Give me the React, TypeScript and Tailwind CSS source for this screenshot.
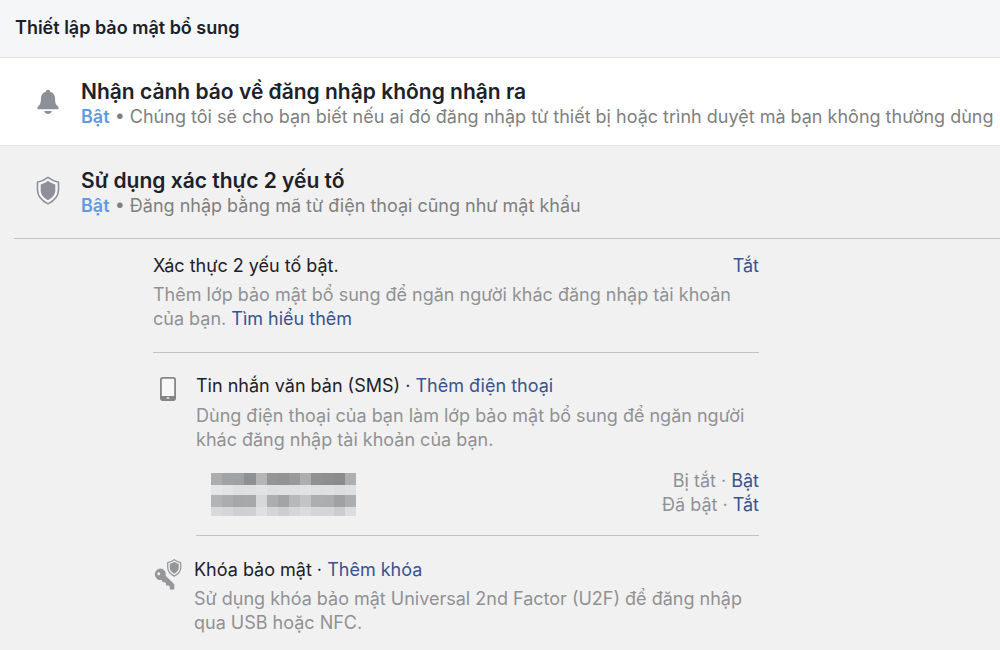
import type { ReactNode } from 'react';

const BellIcon = () => (
    <svg viewBox="0 -2 22 28" className="h-7 w-[22px]" fill="#8d9098" aria-hidden="true">
        <path d="M11 0.8c1.200 0 2 0.700 2.200 1.900 3.300 1 4.900 3.500 4.900 6.900 0 4.200 0.500 6 2.600 7.700 1.300 1.100 1.400 2.900-0.100 2.900H1.400c-1.500 0-1.400-1.800-0.100-2.900 2.100-1.700 2.600-3.500 2.600-7.700 0-3.400 1.600-5.900 4.900-6.900 0.200-1.200 1-1.900 2.200-1.900z" />
        <path d="M7.200 22h7.600c-0.500 1.800-1.900 3-3.800 3s-3.300-1.200-3.800-3z" />
    </svg>
);

const SHIELD_OUTER = 'M12 1.300C9.300 3.500 5.500 5.300 1.500 6.200v7.800c0 6.300 4.500 10.800 10.500 13.900 6-3.100 10.500-7.600 10.500-13.900V6.200C18.500 5.300 14.700 3.500 12 1.300z';
const SHIELD_INNER = 'M12 4.800C9.800 6.500 7.300 7.700 4.700 8.400v5.800c0 4.400 3 7.700 7.300 10 4.300-2.300 7.300-5.600 7.300-10V8.400C16.700 7.700 14.200 6.500 12 4.800z';

const ShieldIcon = () => (
    <svg viewBox="0 0 24 29" className="h-[29px] w-6" aria-hidden="true">
        <path d={SHIELD_OUTER} fill="#f7f7f8" stroke="#8d9098" strokeWidth="1.600" strokeLinejoin="round" />
        <path d={SHIELD_INNER} fill="#8d9098" />
    </svg>
);

const PhoneIcon = () => (
    <svg viewBox="0 0 16 24" className="h-6 w-4" aria-hidden="true">
        <rect x="0.900" y="0.900" width="14.200" height="22.200" rx="2" fill="#f7f7f8" stroke="#858585" strokeWidth="1.800" />
        <path d="M1 19h14v2.500c0 0.900-0.600 1.500-1.500 1.500h-11c-0.900 0-1.500-0.600-1.500-1.500z" fill="#858585" />
        <rect x="6.500" y="20.300" width="3" height="1.500" rx="0.700" fill="#f1f1f1" />
    </svg>
);

const KeyIcon = () => (
    <svg viewBox="0 0 29 32" className="h-8 w-[29px]" aria-hidden="true">
        <path
            fillRule="evenodd"
            d="M7 10.500a5.800 5.800 0 0 1 5.700 7.300l8.600 8.400v5.300h-4.500v-2.700l-1.400-1.200h-2.300v-2.200l-1.200-1.100h-2.100l-1.300-2.300A5.800 5.800 0 1 1 7 10.500zM5.800 14.200a1.500 1.500 0 1 0 0 3 1.500 1.500 0 0 0 0-3z"
            fill="#949699"
        />
        <g transform="translate(13.800 0.800) scale(0.620)">
            <path d={SHIELD_OUTER} fill="#f1f1f1" stroke="#949699" strokeWidth="2" strokeLinejoin="round" />
            <path d={SHIELD_INNER} fill="#949699" />
        </g>
    </svg>
);

// Phone number is masked with a mosaic
const mosaic = [
    { y: 0, height: 12, cells: ['#acadaf', '#a0a2a4', '#9fa2a5', '#8e9193', '#b5b5b8', '#949597', '#929395', '#98999b', '#adaeb0', '#8f9092', '#8d8e90', '#898b8d', '#aeafb1'] },
    { y: 12, height: 10, cells: ['#e5e6e8', '#e2e3e5', '#dedfe1', '#dfe0e2', '#e2e3e5', '#dedfe1', '#dfe0e2', '#dfe0e2', '#e1e2e4', '#dedfe1', '#dfe0e2', '#dcdddf', '#dfe0e2'] },
    { y: 22, height: 12, cells: ['#b3b4b6', '#acadaf', '#a6a7a9', '#a7a8aa', '#d7d8da', '#adaeb0', '#a2a4a6', '#b7b8ba', '#c3c4c6', '#adaeb0', '#acadaf', '#9fa1a4', '#adaeb0'] },
    { y: 34, height: 9, cells: ['#d8d9db', '#d5d6d8', '#cecfd1', '#cfd0d2', '#dfe0e2', '#d4d5d7', '#cdced0', '#d5d6d8', '#dadbdd', '#d4d5d7', '#d4d5d7', '#cbccce', '#dcdddf'] },
];

const MaskedNumber = () => (
    <svg viewBox="0 0 145 43" className="h-[43px] w-[145px]" role="img" aria-label="Số điện thoại" shapeRendering="crispEdges">
        {mosaic.map((row) =>
            row.cells.map((color, i) => (
                <rect key={`${row.y}-${i}`} x={i * 11.15} y={row.y} width="11.200" height={row.height} fill={color} />
            ))
        )}
    </svg>
);

const TextLink = ({ children }: { children: ReactNode }) => (
    <a href="#" className="text-[#385490] hover:underline">{children}</a>
);

interface SettingRowProps {
    icon: ReactNode;
    title: string;
    description: string;
}

const SettingRow = ({ icon, title, description }: SettingRowProps) => (
    <div className="flex items-start pl-9">
        <div className="flex w-6 shrink-0 justify-center pt-2">{icon}</div>
        <div className="ml-[21px]">
            <h3 className="text-[21px] leading-[26px] font-semibold text-[#1d2129]">{title}</h3>
            <p className="text-[18px] leading-6 text-[#7f7f7f]">
                <span className="font-semibold text-[#5f9be3]">Bật</span> • {description}
            </p>
        </div>
    </div>
);

const App = () => {
    return (
        <main className="min-h-screen bg-[#f1f1f1] font-['Inter','Noto_Sans',sans-serif] text-[18px] leading-6 text-[#1d2129]">
            <header className="border-b border-[#dfe1e4] bg-[#f5f6f8] px-[15px] pt-4 pb-[17px]">
                <h2 className="text-[18px] leading-6 font-semibold">Thiết lập bảo mật bổ sung</h2>
            </header>

            <section className="border-b border-[#e2e3e4] bg-white pt-[21px] pb-4">
                <SettingRow
                    icon={<BellIcon />}
                    title="Nhận cảnh báo về đăng nhập không nhận ra"
                    description="Chúng tôi sẽ cho bạn biết nếu ai đó đăng nhập từ thiết bị hoặc trình duyệt mà bạn không thường dùng"
                />
            </section>

            <section>
                <div className="pt-[22px]">
                    <SettingRow
                        icon={<ShieldIcon />}
                        title="Sử dụng xác thực 2 yếu tố"
                        description="Đăng nhập bằng mã từ điện thoại cũng như mật khẩu"
                    />
                </div>
                <hr className="mt-5 ml-[14px] border-[#c3c3c3]" />

                <div className="pt-[15px] pr-[241px] pl-[153px]">
                    <div className="border-b border-[#c3c3c3] pb-[21px]">
                        <div className="flex justify-between">
                            <h4>Xác thực 2 yếu tố bật.</h4>
                            <TextLink>Tắt</TextLink>
                        </div>
                        <p className="mt-[5px] text-[#909194]">
                            Thêm lớp bảo mật bổ sung để ngăn người khác đăng nhập tài khoản của bạn.{' '}
                            <TextLink>Tìm hiểu thêm</TextLink>
                        </p>
                    </div>

                    <div className="flex pt-[21px]">
                        <div className="w-[43px] shrink-0 pt-[3px] pl-[7px]">
                            <PhoneIcon />
                        </div>
                        <div className="grow border-b border-[#c3c3c3] pb-[18px]">
                            <h4>
                                Tin nhắn văn bản (SMS) · <TextLink>Thêm điện thoại</TextLink>
                            </h4>
                            <p className="mt-[6px] text-[#909194]">
                                Dùng điện thoại của bạn làm lớp bảo mật bổ sung để ngăn người khác đăng nhập tài khoản của bạn.
                            </p>
                            <div className="mt-[17px] flex justify-between pl-[15px]">
                                <div className="pt-1">
                                    <MaskedNumber />
                                </div>
                                <div className="text-right text-[#909194]">
                                    <p>Bị tắt · <TextLink>Bật</TextLink></p>
                                    <p>Đã bật · <TextLink>Tắt</TextLink></p>
                                </div>
                            </div>
                        </div>
                    </div>

                    <div className="flex pt-[22px]">
                        <div className="w-[41px] shrink-0">
                            <KeyIcon />
                        </div>
                        <div>
                            <h4>
                                Khóa bảo mật · <TextLink>Thêm khóa</TextLink>
                            </h4>
                            <p className="mt-[5px] text-[#909194]">
                                Sử dụng khóa bảo mật Universal 2nd Factor (U2F) để đăng nhập qua USB hoặc NFC.
                            </p>
                        </div>
                    </div>
                </div>
            </section>
        </main>
    );
};

export default App;
